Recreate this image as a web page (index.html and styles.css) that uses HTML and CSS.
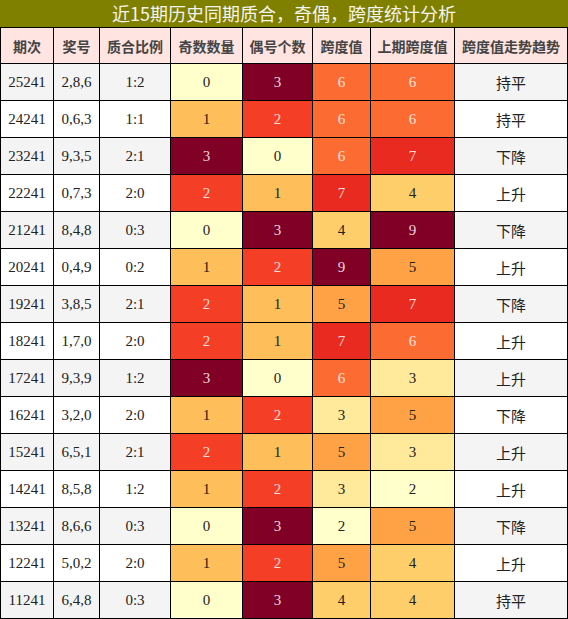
FILE: index.html
```html
<!DOCTYPE html>
<html lang="zh">
<head>
<meta charset="utf-8">
<title>近15期历史同期质合，奇偶，跨度统计分析</title>
<link rel="stylesheet" href="styles.css">
</head>
<body>
<div class="title">近15期历史同期质合，奇偶，跨度统计分析</div>
<div class="grid">
  <div class="th">期次</div><div class="th">奖号</div><div class="th">质合比例</div><div class="th">奇数数量</div><div class="th">偶号个数</div><div class="th">跨度值</div><div class="th">上期跨度值</div><div class="th">跨度值走势趋势</div>

  <div class="td g">25241</div><div class="td g">2,8,6</div><div class="td g">1:2</div><div class="td c0">0</div><div class="td c3">3</div><div class="td s6">6</div><div class="td s6">6</div><div class="td g cn">持平</div>
  <div class="td">24241</div><div class="td">0,6,3</div><div class="td">1:1</div><div class="td c1">1</div><div class="td c2">2</div><div class="td s6">6</div><div class="td s6">6</div><div class="td cn">持平</div>
  <div class="td g">23241</div><div class="td g">9,3,5</div><div class="td g">2:1</div><div class="td c3">3</div><div class="td c0">0</div><div class="td s6">6</div><div class="td s7">7</div><div class="td g cn">下降</div>
  <div class="td">22241</div><div class="td">0,7,3</div><div class="td">2:0</div><div class="td c2">2</div><div class="td c1">1</div><div class="td s7">7</div><div class="td s4">4</div><div class="td cn">上升</div>
  <div class="td g">21241</div><div class="td g">8,4,8</div><div class="td g">0:3</div><div class="td c0">0</div><div class="td c3">3</div><div class="td s4">4</div><div class="td s9">9</div><div class="td g cn">下降</div>
  <div class="td">20241</div><div class="td">0,4,9</div><div class="td">0:2</div><div class="td c1">1</div><div class="td c2">2</div><div class="td s9">9</div><div class="td s5">5</div><div class="td cn">上升</div>
  <div class="td g">19241</div><div class="td g">3,8,5</div><div class="td g">2:1</div><div class="td c2">2</div><div class="td c1">1</div><div class="td s5">5</div><div class="td s7">7</div><div class="td g cn">下降</div>
  <div class="td">18241</div><div class="td">1,7,0</div><div class="td">2:0</div><div class="td c2">2</div><div class="td c1">1</div><div class="td s7">7</div><div class="td s6">6</div><div class="td cn">上升</div>
  <div class="td g">17241</div><div class="td g">9,3,9</div><div class="td g">1:2</div><div class="td c3">3</div><div class="td c0">0</div><div class="td s6">6</div><div class="td s3">3</div><div class="td g cn">上升</div>
  <div class="td">16241</div><div class="td">3,2,0</div><div class="td">2:0</div><div class="td c1">1</div><div class="td c2">2</div><div class="td s3">3</div><div class="td s5">5</div><div class="td cn">下降</div>
  <div class="td g">15241</div><div class="td g">6,5,1</div><div class="td g">2:1</div><div class="td c2">2</div><div class="td c1">1</div><div class="td s5">5</div><div class="td s3">3</div><div class="td g cn">上升</div>
  <div class="td">14241</div><div class="td">8,5,8</div><div class="td">1:2</div><div class="td c1">1</div><div class="td c2">2</div><div class="td s3">3</div><div class="td s2">2</div><div class="td cn">上升</div>
  <div class="td g">13241</div><div class="td g">8,6,6</div><div class="td g">0:3</div><div class="td c0">0</div><div class="td c3">3</div><div class="td s2">2</div><div class="td s5">5</div><div class="td g cn">下降</div>
  <div class="td">12241</div><div class="td">5,0,2</div><div class="td">2:0</div><div class="td c1">1</div><div class="td c2">2</div><div class="td s5">5</div><div class="td s4">4</div><div class="td cn">上升</div>
  <div class="td g">11241</div><div class="td g">6,4,8</div><div class="td g">0:3</div><div class="td c0">0</div><div class="td c3">3</div><div class="td s4">4</div><div class="td s4">4</div><div class="td g cn">持平</div>
</div>
</body>
</html>
```

FILE: styles.css
```css
html, body {
  margin: 0;
  padding: 0;
  background: #fff;
}

.title {
  height: 27px;
  background: #808000;
  color: #f4f4ee;
  font-family: "Noto Sans CJK SC", "Noto Sans", sans-serif;
  font-size: 18px;
  line-height: 27px;
  text-align: center;
}

.grid {
  display: grid;
  width: 568px;
  box-sizing: border-box;
  grid-template-columns: 52px 45px 70px 71px 69px 57px 83px 112px;
  grid-template-rows: 35px;
  grid-auto-rows: 36px;
  gap: 1px;
  padding: 1px;
  background: #000;
}

.th {
  display: flex;
  align-items: center;
  justify-content: center;
  background: #ffe4e1;
  color: #444;
  font-family: "Noto Sans CJK SC", "Noto Sans", sans-serif;
  font-size: 14px;
  font-weight: bold;
  white-space: nowrap;
}

.td {
  display: flex;
  align-items: center;
  justify-content: center;
  background: #fff;
  color: #222;
  font-family: "Liberation Serif", "Times New Roman", serif;
  font-size: 15px;
  white-space: nowrap;
}

.td.g { background: #f4f4f4; }

.td.cn {
  font-family: "Noto Sans CJK SC", "Noto Sans", sans-serif;
  font-size: 15px;
  color: #222;
}

/* odd / even count scale */
.c0 { background: #ffffcc !important; }
.c1 { background: #febf5a !important; }
.c2 { background: #f43e25 !important; color: rgba(255,255,255,0.85) !important; }
.c3 { background: #800026 !important; color: rgba(255,255,255,0.85) !important; }

/* span scale */
.s2 { background: #ffffcc !important; }
.s3 { background: #ffe99b !important; }
.s4 { background: #fece6b !important; }
.s5 { background: #fea245 !important; }
.s6 { background: #fc6b32 !important; color: rgba(255,255,255,0.85) !important; }
.s7 { background: #e92a20 !important; color: rgba(255,255,255,0.85) !important; }
.s9 { background: #800026 !important; color: rgba(255,255,255,0.85) !important; }
```
